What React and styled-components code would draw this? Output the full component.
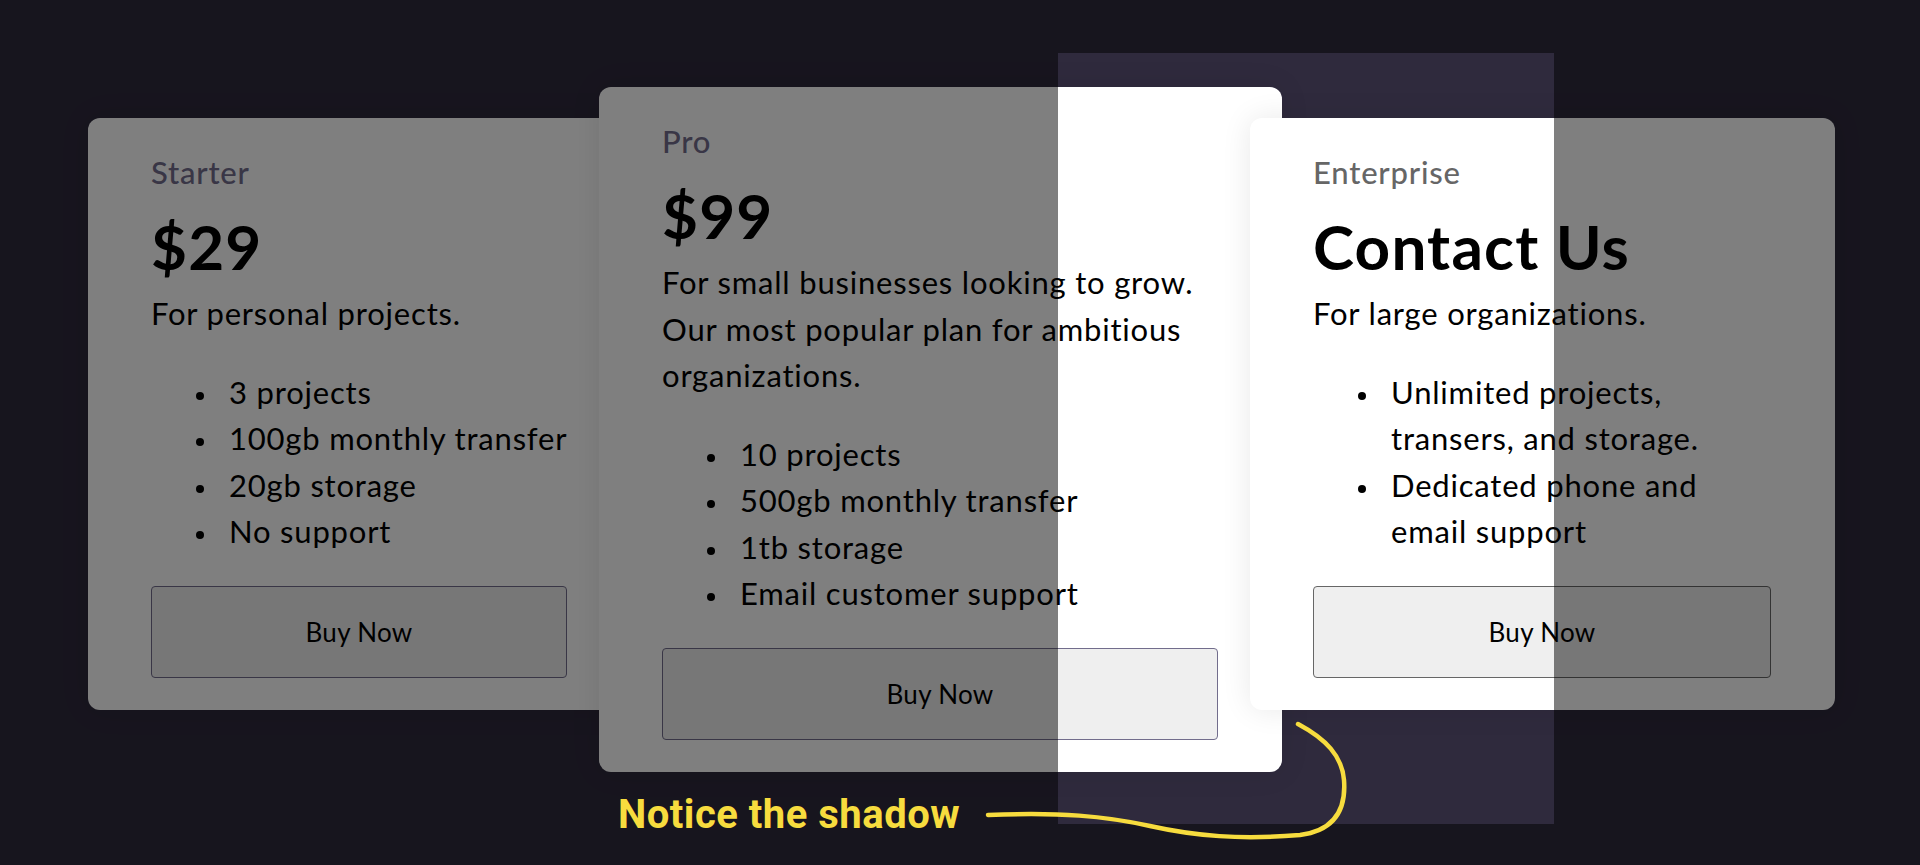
import React from 'react';
import styled, {createGlobalStyle} from "styled-components";

const GlobalStyle = createGlobalStyle`
  html, body {
    margin: 0;
    padding: 0;
    background: #2f2a3d;
  }
  * {
    box-sizing: border-box;
  }
`;

const Page = styled.div`
  position: relative;
  width: 1920px;
  height: 865px;
  overflow: hidden;
  background: #2f2a3d;
  font-family: Lato, "Liberation Sans", sans-serif;
  color: #000;
`;

const CardRow = styled.div`
  display: flex;
  align-items: flex-start;
  padding: 118px 0 0 88px;
`;

const Card = styled.div`
  position: relative;
  flex: none;
  width: ${p => p.$width}px;
  margin-top: ${p => p.$lift ? -31 : 0}px;
  margin-left: ${p => p.$first ? 0 : -32}px;
  padding: 32px 64px 32px 63px;
  background: #fff;
  border-radius: 12px;
  box-shadow: 0 0 30px rgba(0, 0, 0, 0.09);
`;

const PlanName = styled.div`
  font-size: 31px;
  line-height: 45px;
  font-weight: 500;
  letter-spacing: 0.8px;
  color: ${p => p.$tint};
`;

const Price = styled.div`
  margin-top: 15px;
  font-size: 62px;
  line-height: 72px;
  font-weight: 700;
  letter-spacing: 1.2px;
`;

const Blurb = styled.p`
  margin: 8px 0 0;
  font-size: 31px;
  line-height: 46.5px;
  letter-spacing: 0.8px;
`;

const Features = styled.ul`
  margin: 32px 0 0;
  padding-left: 78px;
  list-style: none;
  font-size: 31px;
  line-height: 46.5px;
  letter-spacing: 0.8px;
  white-space: ${p => p.$nowrap ? "nowrap" : "normal"};

  li::before {
    content: "";
    display: inline-block;
    width: 8px;
    height: 8px;
    margin: 0 25px 0 -33px;
    border-radius: 50%;
    background: #000;
    vertical-align: middle;
  }
`;

const BuyButton = styled.button`
  display: block;
  width: 100%;
  height: 92px;
  margin-top: 31px;
  background: #efefef;
  border: 1.5px solid ${p => p.$tint};
  border-radius: 4px;
  font-family: Lato, "Liberation Sans", sans-serif;
  font-size: 26px;
  letter-spacing: 0.3px;
  color: #000;
  cursor: pointer;
`;

// the lit-up window, everything else sits under its dimming shadow
const Spotlight = styled.div`
  position: absolute;
  left: 1058px;
  top: 53px;
  width: 496px;
  height: 771px;
  box-shadow: 0 0 0 3000px rgba(0, 0, 0, 0.5);
  pointer-events: none;
`;

const Note = styled.div`
  position: absolute;
  left: 618px;
  top: 790px;
  font-family: Roboto, "Liberation Sans", sans-serif;
  font-weight: 700;
  font-size: 40px;
  line-height: 50px;
  letter-spacing: 0.5px;
  color: #f7dc3e;
`;

const Scribble = styled.svg`
  position: absolute;
  left: 0;
  top: 0;
  pointer-events: none;
`;

const plans = [
    {
        name: "Starter",
        price: "$29",
        blurb: "For personal projects.",
        features: ["3 projects", "100gb monthly transfer", "20gb storage", "No support"],
        width: 543,
        nowrap: true,
        tint: "#726d8c",
    },
    {
        name: "Pro",
        price: "$99",
        blurb: "For small businesses looking to grow. Our most popular plan for ambitious organizations.",
        features: ["10 projects", "500gb monthly transfer", "1tb storage", "Email customer support"],
        width: 683,
        lift: true,
        tint: "#726d8c",
    },
    {
        name: "Enterprise",
        price: "Contact Us",
        blurb: "For large organizations.",
        features: ["Unlimited projects, transers, and storage.", "Dedicated phone and email support"],
        width: 585,
        tint: "#666666",
    },
];

export default function App() {
    return (
        <Page>
            <GlobalStyle/>
            <CardRow>
                {plans.map((plan, i) => (
                    <Card key={plan.name} $width={plan.width} $lift={plan.lift} $first={i === 0}>
                        <PlanName $tint={plan.tint}>{plan.name}</PlanName>
                        <Price>{plan.price}</Price>
                        <Blurb>{plan.blurb}</Blurb>
                        <Features $nowrap={plan.nowrap}>
                            {plan.features.map(f => <li key={f}>{f}</li>)}
                        </Features>
                        <BuyButton $tint={plan.tint}>Buy Now</BuyButton>
                    </Card>
                ))}
            </CardRow>
            <Spotlight/>
            <Note>Notice the shadow</Note>
            <Scribble width="1920" height="865" viewBox="0 0 1920 865">
                <path
                    d="M988 815 C1060 812 1105 816 1150 826 S1240 840 1300 835 C1338 830 1346 806 1344 780 C1342 756 1326 739 1298 724"
                    fill="none"
                    stroke="#f7dc3e"
                    strokeWidth="4.5"
                    strokeLinecap="round"
                />
            </Scribble>
        </Page>
    );
}
